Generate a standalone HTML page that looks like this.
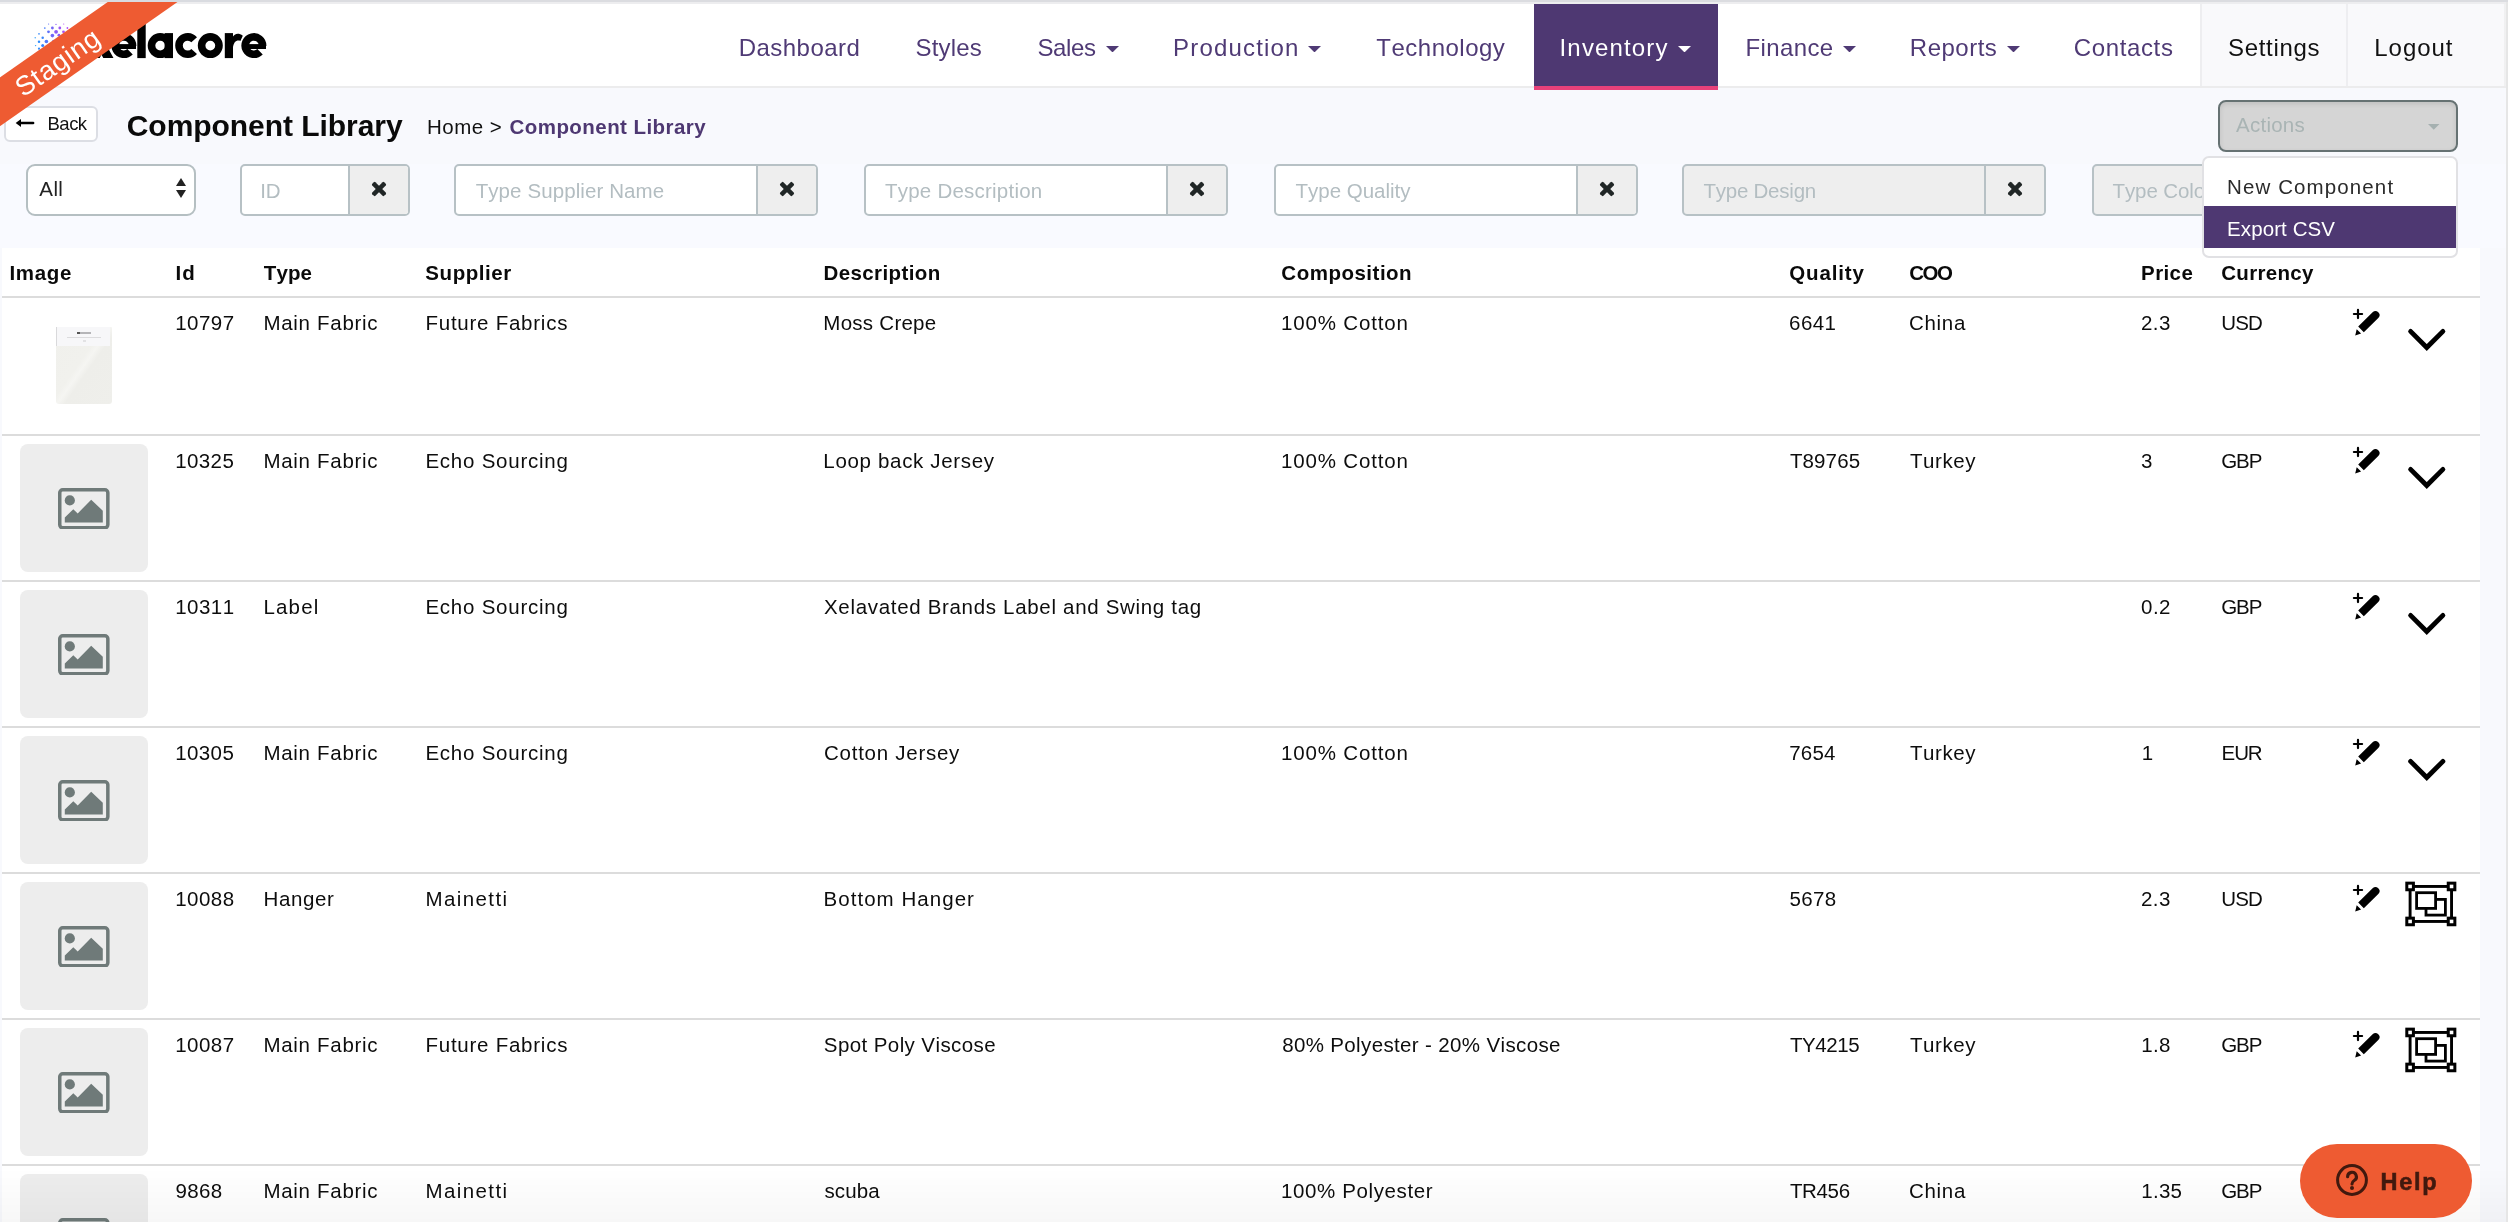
<!DOCTYPE html>
<html><head><meta charset="utf-8"><title>Component Library</title>
<style>
*{box-sizing:border-box;margin:0;padding:0}
html,body{width:2508px;height:1222px;overflow:hidden}
body{position:relative;font-family:"Liberation Sans", sans-serif;background:#f8f9fd;font-kerning:none}
.t{position:absolute;white-space:pre;display:block}
.a{position:absolute;display:block}
</style></head>
<body>
<div id="root" style="position:absolute;left:0;top:0;width:2508px;height:1222px;will-change:transform">

<div class="a" style="left:0;top:0;width:2508px;height:2px;background:#dbdce0"></div>
<div class="a" style="left:0;top:2px;width:2508px;height:2px;background:#ededef"></div>
<div class="a" style="left:0;top:4px;width:2504px;height:82px;background:#fff"></div>
<div class="a" style="left:2504px;top:4px;width:2px;height:82px;background:#f0f0f1"></div>
<div class="a" style="left:0;top:86px;width:2506px;height:2px;background:#ececed"></div>
<div class="a" style="left:2200px;top:4px;width:304px;height:82px;background:#f9f9fb;border-left:2px solid #eeeef0"></div>
<div class="a" style="left:2346px;top:4px;width:2px;height:82px;background:#eeeef1"></div>
<div class="a" style="left:1534px;top:4px;width:184px;height:86px;background:#4e3872;border-bottom:4px solid #e8417a"></div>
<svg class="a" style="left:1105.5px;top:45.8px" width="13" height="6.4" viewBox="0 0 13 6.4"><path d="M0 0H13L6.5 6.4Z" fill="#4f3a75"/></svg>
<svg class="a" style="left:1307.8px;top:45.8px" width="13" height="6.4" viewBox="0 0 13 6.4"><path d="M0 0H13L6.5 6.4Z" fill="#4f3a75"/></svg>
<svg class="a" style="left:1677.5px;top:45.8px" width="13" height="6.4" viewBox="0 0 13 6.4"><path d="M0 0H13L6.5 6.4Z" fill="#fff"/></svg>
<svg class="a" style="left:1842.7px;top:45.8px" width="13" height="6.4" viewBox="0 0 13 6.4"><path d="M0 0H13L6.5 6.4Z" fill="#4f3a75"/></svg>
<svg class="a" style="left:2006.8px;top:45.8px" width="13" height="6.4" viewBox="0 0 13 6.4"><path d="M0 0H13L6.5 6.4Z" fill="#4f3a75"/></svg>
<svg class="a" style="left:0;top:0" width="120" height="90" viewBox="0 0 120 90"><circle cx="48.6" cy="24.0" r="0.6" fill="#5b6cf5"/><circle cx="56" cy="24.4" r="0.65" fill="#8f5cf6"/><circle cx="63.7" cy="24" r="0.6" fill="#b04ff5"/><circle cx="44.8" cy="28" r="0.85" fill="#4a7dfa"/><circle cx="52.4" cy="28" r="1.4" fill="#7464f6"/><circle cx="59.8" cy="28" r="1.4" fill="#9c55f5"/><circle cx="67.4" cy="28" r="0.9" fill="#b84ff5"/><circle cx="48.5" cy="31.8" r="1.4" fill="#5f70f8"/><circle cx="56.1" cy="31.8" r="1.9" fill="#8a5cf7"/><circle cx="63.5" cy="31.8" r="1.4" fill="#a855f5"/><circle cx="52.4" cy="35.6" r="1.8" fill="#6f68f8"/><circle cx="58.9" cy="35.2" r="1.4" fill="#8a5cf7"/><circle cx="39" cy="33.8" r="0.85" fill="#3d8dfb"/><circle cx="35.2" cy="37.8" r="0.7" fill="#35a0fc"/><circle cx="42.7" cy="37.8" r="1.25" fill="#3a86fb"/><circle cx="39" cy="41.7" r="1.25" fill="#2f8dfc"/><circle cx="46.4" cy="41.5" r="1.8" fill="#4f78fa"/><circle cx="35.6" cy="45.6" r="0.7" fill="#35a0fc"/><circle cx="42.7" cy="45.4" r="1.5" fill="#3384fb"/><circle cx="39" cy="48.7" r="1.1" fill="#2f8dfc"/><circle cx="46.4" cy="49" r="1.6" fill="#3f80fb"/><circle cx="50" cy="45.3" r="1.8" fill="#5a72f9"/><circle cx="53.8" cy="41.5" r="1.8" fill="#6a6af8"/></svg>
<svg class="a" style="left:0;top:0" width="280" height="70" viewBox="0 0 280 70"><path d="M89.5 33.1H99.7L113.5 58.1H103.3ZM103.3 33.1H113.5L99.7 58.1H89.5Z" fill="#000"/><path d="M130.05 51.75A8.7 8.7 0 1 1 132.59 45.90" fill="none" stroke="#000" stroke-width="7.6"/><rect x="118.0" y="44.1" width="18.0" height="4.9" fill="#000"/><rect x="137.3" y="23.6" width="8.4" height="34.5" fill="#000"/><circle cx="160.2" cy="45.6" r="8.7" fill="none" stroke="#000" stroke-width="7.6"/><rect x="164.6" y="33.1" width="8.4" height="25" fill="#000"/><path d="M194.17 51.42A8.7 8.7 0 1 1 194.17 39.78" fill="none" stroke="#000" stroke-width="7.6"/><circle cx="210.3" cy="45.6" r="8.7" fill="none" stroke="#000" stroke-width="7.6"/><rect x="224.8" y="33.1" width="8.2" height="25" fill="#000"/><path d="M232.6 37.2C234.5 33.6 238.5 32.4 242.8 35.8L240.4 40.9C236.5 39.6 233.6 42 232.9 48Z" fill="#000"/><path d="M260.05 51.75A8.7 8.7 0 1 1 262.59 45.90" fill="none" stroke="#000" stroke-width="7.6"/><rect x="248.0" y="44.1" width="18.0" height="4.9" fill="#000"/></svg>
<div class="a" style="left:0;top:164px;width:2506px;height:84px;background:#f9faff"></div>
<div class="a" style="left:2px;top:248px;width:2478px;height:980px;background:#fff"></div>
<div class="a" style="left:2px;top:296px;width:2478px;height:2px;background:#dcdcdc"></div>
<div class="a" style="left:2px;top:434px;width:2478px;height:2px;background:#dcdcdc"></div>
<div class="a" style="left:2px;top:580px;width:2478px;height:2px;background:#dcdcdc"></div>
<div class="a" style="left:2px;top:726px;width:2478px;height:2px;background:#dcdcdc"></div>
<div class="a" style="left:2px;top:872px;width:2478px;height:2px;background:#dcdcdc"></div>
<div class="a" style="left:2px;top:1018px;width:2478px;height:2px;background:#dcdcdc"></div>
<div class="a" style="left:2px;top:1164px;width:2478px;height:2px;background:#dcdcdc"></div>
<div class="a" style="left:4px;top:106px;width:93.5px;height:35.5px;background:#fff;border:2px solid #dcdee4;border-radius:6px"></div>
<svg class="a" style="left:14px;top:114px" width="24" height="18" viewBox="0 0 24 18"><path d="M5 9H19.1" fill="none" stroke="#000" stroke-width="2.6" stroke-linecap="round"/><path d="M1.7 9L7 4.9V13.1Z" fill="#000"/></svg>
<div class="a" style="left:26px;top:164px;width:170px;height:52px;background:#fff;border:2px solid #b5bfc2;border-radius:9px"></div>
<svg class="a" style="left:175.5px;top:178px" width="10" height="20" viewBox="0 0 10 20"><path d="M0 8L5 0L10 8ZM0 12L5 20L10 12Z" fill="#222"/></svg>
<div class="a" style="left:240px;top:164px;width:170px;height:52px;border:2px solid #b7c1c5;border-radius:5px;background:#fff;overflow:hidden"><div class="a" style="left:106px;top:0;width:60px;height:48px;background:#eee;border-left:2px solid #b7c1c5"></div></div><svg class="a" style="left:369.00px;top:178.60px" width="20" height="20" viewBox="-10 -10 20 20"><g transform="rotate(45)" fill="#202626"><rect x="-8.4" y="-2.25" width="16.8" height="4.5" rx="1.1"/><rect x="-2.25" y="-8.4" width="4.5" height="16.8" rx="1.1"/></g></svg>
<div class="a" style="left:454px;top:164px;width:364px;height:52px;border:2px solid #b7c1c5;border-radius:5px;background:#fff;overflow:hidden"><div class="a" style="left:300px;top:0;width:60px;height:48px;background:#eee;border-left:2px solid #b7c1c5"></div></div><svg class="a" style="left:777.05px;top:178.60px" width="20" height="20" viewBox="-10 -10 20 20"><g transform="rotate(45)" fill="#202626"><rect x="-8.4" y="-2.25" width="16.8" height="4.5" rx="1.1"/><rect x="-2.25" y="-8.4" width="4.5" height="16.8" rx="1.1"/></g></svg>
<div class="a" style="left:864px;top:164px;width:364px;height:52px;border:2px solid #b7c1c5;border-radius:5px;background:#fff;overflow:hidden"><div class="a" style="left:300px;top:0;width:60px;height:48px;background:#eee;border-left:2px solid #b7c1c5"></div></div><svg class="a" style="left:1187.00px;top:178.60px" width="20" height="20" viewBox="-10 -10 20 20"><g transform="rotate(45)" fill="#202626"><rect x="-8.4" y="-2.25" width="16.8" height="4.5" rx="1.1"/><rect x="-2.25" y="-8.4" width="4.5" height="16.8" rx="1.1"/></g></svg>
<div class="a" style="left:1274px;top:164px;width:364px;height:52px;border:2px solid #b7c1c5;border-radius:5px;background:#fff;overflow:hidden"><div class="a" style="left:300px;top:0;width:60px;height:48px;background:#eee;border-left:2px solid #b7c1c5"></div></div><svg class="a" style="left:1597.05px;top:178.60px" width="20" height="20" viewBox="-10 -10 20 20"><g transform="rotate(45)" fill="#202626"><rect x="-8.4" y="-2.25" width="16.8" height="4.5" rx="1.1"/><rect x="-2.25" y="-8.4" width="4.5" height="16.8" rx="1.1"/></g></svg>
<div class="a" style="left:1682px;top:164px;width:364px;height:52px;border:2px solid #b7c1c5;border-radius:5px;background:#eee;overflow:hidden"><div class="a" style="left:300px;top:0;width:60px;height:48px;background:#eee;border-left:2px solid #b7c1c5"></div></div><svg class="a" style="left:2005.05px;top:178.60px" width="20" height="20" viewBox="-10 -10 20 20"><g transform="rotate(45)" fill="#202626"><rect x="-8.4" y="-2.25" width="16.8" height="4.5" rx="1.1"/><rect x="-2.25" y="-8.4" width="4.5" height="16.8" rx="1.1"/></g></svg>
<div class="a" style="left:2092px;top:164px;width:364px;height:52px;border:2px solid #b7c1c5;border-radius:5px;background:#eee;overflow:hidden"><div class="a" style="left:300px;top:0;width:60px;height:48px;background:#eee;border-left:2px solid #b7c1c5"></div></div><svg class="a" style="left:2414.95px;top:178.60px" width="20" height="20" viewBox="-10 -10 20 20"><g transform="rotate(45)" fill="#202626"><rect x="-8.4" y="-2.25" width="16.8" height="4.5" rx="1.1"/><rect x="-2.25" y="-8.4" width="4.5" height="16.8" rx="1.1"/></g></svg>
<span class="t" style="left:2112.52px;top:180.64px;font-size:20.5px;line-height:20.5px;font-weight:400;color:#b3bdc1;letter-spacing:-0.102px;">Type Color</span>
<div class="a" style="left:2218px;top:100px;width:240px;height:52px;background:#d5d5d5;border:2px solid #667273;border-radius:8px;box-shadow:inset 0 2px 5px rgba(0,0,0,.1)"></div>
<svg class="a" style="left:2428.2px;top:124px" width="11.5" height="5.8" viewBox="0 0 11.5 5.8"><path d="M0 0H11.5L5.75 5.8Z" fill="#a5b0b0"/></svg>
<div class="a" style="left:2202px;top:156px;width:256px;height:102px;background:#fff;border:2px solid #e1e1e4;border-radius:7px"></div>
<div class="a" style="left:2204px;top:206px;width:252px;height:42px;background:#4e3872"></div>
<div class="a" style="left:55.7px;top:326.5px;width:56.7px;height:77px;background:linear-gradient(125deg,#f0f0ec 0%,#f1f1ed 44%,#f5f5f2 50%,#eeeeea 57%,#efefeb 100%);border-radius:1px 1px 3px 3px"></div>
<div class="a" style="left:56.2px;top:326.5px;width:54px;height:19.2px;background:#f7f7f9;border-left:1.5px solid #d9d9db"></div>
<div class="a" style="left:76.5px;top:331.6px;width:3px;height:2.2px;background:#555"></div>
<div class="a" style="left:80px;top:332px;width:10.5px;height:1.6px;background:#b5b5b8"></div>
<div class="a" style="left:66.5px;top:336.7px;width:34px;height:1px;background:#dcdcde"></div>
<div class="a" style="left:82.5px;top:339.6px;width:3px;height:2.2px;background:#e2e2e4"></div>
<div class="a" style="left:20px;top:444px;width:128px;height:128px;background:#ededed;border-radius:8px"></div><svg class="a" style="left:58.3px;top:487.8px" width="51.6" height="41.6" viewBox="0 0 51.6 41.6"><rect x="1.75" y="1.75" width="48.1" height="38.1" rx="3" ry="3" fill="none" stroke="#6f7a79" stroke-width="3.5"/><circle cx="11.8" cy="12.4" r="5.1" fill="#6f7a79"/><path d="M6.8 29.5L15.3 21.2L19.7 25.4L33.2 11.8L44.8 22.7V34.6H6.8Z" fill="#6f7a79"/></svg>
<div class="a" style="left:20px;top:590px;width:128px;height:128px;background:#ededed;border-radius:8px"></div><svg class="a" style="left:58.3px;top:633.8px" width="51.6" height="41.6" viewBox="0 0 51.6 41.6"><rect x="1.75" y="1.75" width="48.1" height="38.1" rx="3" ry="3" fill="none" stroke="#6f7a79" stroke-width="3.5"/><circle cx="11.8" cy="12.4" r="5.1" fill="#6f7a79"/><path d="M6.8 29.5L15.3 21.2L19.7 25.4L33.2 11.8L44.8 22.7V34.6H6.8Z" fill="#6f7a79"/></svg>
<div class="a" style="left:20px;top:736px;width:128px;height:128px;background:#ededed;border-radius:8px"></div><svg class="a" style="left:58.3px;top:779.8px" width="51.6" height="41.6" viewBox="0 0 51.6 41.6"><rect x="1.75" y="1.75" width="48.1" height="38.1" rx="3" ry="3" fill="none" stroke="#6f7a79" stroke-width="3.5"/><circle cx="11.8" cy="12.4" r="5.1" fill="#6f7a79"/><path d="M6.8 29.5L15.3 21.2L19.7 25.4L33.2 11.8L44.8 22.7V34.6H6.8Z" fill="#6f7a79"/></svg>
<div class="a" style="left:20px;top:882px;width:128px;height:128px;background:#ededed;border-radius:8px"></div><svg class="a" style="left:58.3px;top:925.8px" width="51.6" height="41.6" viewBox="0 0 51.6 41.6"><rect x="1.75" y="1.75" width="48.1" height="38.1" rx="3" ry="3" fill="none" stroke="#6f7a79" stroke-width="3.5"/><circle cx="11.8" cy="12.4" r="5.1" fill="#6f7a79"/><path d="M6.8 29.5L15.3 21.2L19.7 25.4L33.2 11.8L44.8 22.7V34.6H6.8Z" fill="#6f7a79"/></svg>
<div class="a" style="left:20px;top:1028px;width:128px;height:128px;background:#ededed;border-radius:8px"></div><svg class="a" style="left:58.3px;top:1071.8px" width="51.6" height="41.6" viewBox="0 0 51.6 41.6"><rect x="1.75" y="1.75" width="48.1" height="38.1" rx="3" ry="3" fill="none" stroke="#6f7a79" stroke-width="3.5"/><circle cx="11.8" cy="12.4" r="5.1" fill="#6f7a79"/><path d="M6.8 29.5L15.3 21.2L19.7 25.4L33.2 11.8L44.8 22.7V34.6H6.8Z" fill="#6f7a79"/></svg>
<div class="a" style="left:20px;top:1174px;width:128px;height:128px;background:#ededed;border-radius:8px"></div><svg class="a" style="left:58.3px;top:1217.8px" width="51.6" height="41.6" viewBox="0 0 51.6 41.6"><rect x="1.75" y="1.75" width="48.1" height="38.1" rx="3" ry="3" fill="none" stroke="#6f7a79" stroke-width="3.5"/><circle cx="11.8" cy="12.4" r="5.1" fill="#6f7a79"/><path d="M6.8 29.5L15.3 21.2L19.7 25.4L33.2 11.8L44.8 22.7V34.6H6.8Z" fill="#6f7a79"/></svg>
<svg class="a" style="left:2352px;top:308px" width="30" height="30" viewBox="0 0 30 30"><path d="M1.9 6H10.1M6 1.9V10.1" stroke="#000" stroke-width="2.2" stroke-linecap="round" fill="none"/><path d="M6.2 18.5L20.6 4.3a4 4 0 0 1 5.7 5.7L11.8 24.3Z" fill="#000"/><path d="M4.7 21.3L9.1 25.5L3.2 27.4Z" fill="#000"/></svg>
<svg class="a" style="left:2406px;top:327px" width="44" height="28" viewBox="0 0 44 28"><path d="M4.6 4.4L20.75 20.5L36.9 4.4" stroke="#000" stroke-width="4.8" stroke-linecap="round" stroke-linejoin="miter" fill="none"/></svg>
<svg class="a" style="left:2352px;top:446px" width="30" height="30" viewBox="0 0 30 30"><path d="M1.9 6H10.1M6 1.9V10.1" stroke="#000" stroke-width="2.2" stroke-linecap="round" fill="none"/><path d="M6.2 18.5L20.6 4.3a4 4 0 0 1 5.7 5.7L11.8 24.3Z" fill="#000"/><path d="M4.7 21.3L9.1 25.5L3.2 27.4Z" fill="#000"/></svg>
<svg class="a" style="left:2406px;top:465px" width="44" height="28" viewBox="0 0 44 28"><path d="M4.6 4.4L20.75 20.5L36.9 4.4" stroke="#000" stroke-width="4.8" stroke-linecap="round" stroke-linejoin="miter" fill="none"/></svg>
<svg class="a" style="left:2352px;top:592px" width="30" height="30" viewBox="0 0 30 30"><path d="M1.9 6H10.1M6 1.9V10.1" stroke="#000" stroke-width="2.2" stroke-linecap="round" fill="none"/><path d="M6.2 18.5L20.6 4.3a4 4 0 0 1 5.7 5.7L11.8 24.3Z" fill="#000"/><path d="M4.7 21.3L9.1 25.5L3.2 27.4Z" fill="#000"/></svg>
<svg class="a" style="left:2406px;top:611px" width="44" height="28" viewBox="0 0 44 28"><path d="M4.6 4.4L20.75 20.5L36.9 4.4" stroke="#000" stroke-width="4.8" stroke-linecap="round" stroke-linejoin="miter" fill="none"/></svg>
<svg class="a" style="left:2352px;top:738px" width="30" height="30" viewBox="0 0 30 30"><path d="M1.9 6H10.1M6 1.9V10.1" stroke="#000" stroke-width="2.2" stroke-linecap="round" fill="none"/><path d="M6.2 18.5L20.6 4.3a4 4 0 0 1 5.7 5.7L11.8 24.3Z" fill="#000"/><path d="M4.7 21.3L9.1 25.5L3.2 27.4Z" fill="#000"/></svg>
<svg class="a" style="left:2406px;top:757px" width="44" height="28" viewBox="0 0 44 28"><path d="M4.6 4.4L20.75 20.5L36.9 4.4" stroke="#000" stroke-width="4.8" stroke-linecap="round" stroke-linejoin="miter" fill="none"/></svg>
<svg class="a" style="left:2352px;top:884px" width="30" height="30" viewBox="0 0 30 30"><path d="M1.9 6H10.1M6 1.9V10.1" stroke="#000" stroke-width="2.2" stroke-linecap="round" fill="none"/><path d="M6.2 18.5L20.6 4.3a4 4 0 0 1 5.7 5.7L11.8 24.3Z" fill="#000"/><path d="M4.7 21.3L9.1 25.5L3.2 27.4Z" fill="#000"/></svg>
<svg class="a" style="left:2405px;top:881px" width="52" height="46" viewBox="0 0 52 46"><g fill="none" stroke="#000"><rect x="5.1" y="5.45" width="41.45" height="35" stroke-width="2.9"/><rect x="21" y="18.4" width="19.4" height="15.7" stroke-width="2.8"/><rect x="11.6" y="11.7" width="19" height="15.7" stroke-width="2.8" fill="#fff"/><g stroke-width="3" fill="#fff"><rect x="1.8" y="2.15" width="6.6" height="6.6"/><rect x="43.25" y="2.15" width="6.6" height="6.6"/><rect x="1.8" y="37.15" width="6.6" height="6.6"/><rect x="43.25" y="37.15" width="6.6" height="6.6"/></g></g></svg>
<svg class="a" style="left:2352px;top:1030px" width="30" height="30" viewBox="0 0 30 30"><path d="M1.9 6H10.1M6 1.9V10.1" stroke="#000" stroke-width="2.2" stroke-linecap="round" fill="none"/><path d="M6.2 18.5L20.6 4.3a4 4 0 0 1 5.7 5.7L11.8 24.3Z" fill="#000"/><path d="M4.7 21.3L9.1 25.5L3.2 27.4Z" fill="#000"/></svg>
<svg class="a" style="left:2405px;top:1027px" width="52" height="46" viewBox="0 0 52 46"><g fill="none" stroke="#000"><rect x="5.1" y="5.45" width="41.45" height="35" stroke-width="2.9"/><rect x="21" y="18.4" width="19.4" height="15.7" stroke-width="2.8"/><rect x="11.6" y="11.7" width="19" height="15.7" stroke-width="2.8" fill="#fff"/><g stroke-width="3" fill="#fff"><rect x="1.8" y="2.15" width="6.6" height="6.6"/><rect x="43.25" y="2.15" width="6.6" height="6.6"/><rect x="1.8" y="37.15" width="6.6" height="6.6"/><rect x="43.25" y="37.15" width="6.6" height="6.6"/></g></g></svg>
<svg class="a" style="left:2352px;top:1176px" width="30" height="30" viewBox="0 0 30 30"><path d="M1.9 6H10.1M6 1.9V10.1" stroke="#000" stroke-width="2.2" stroke-linecap="round" fill="none"/><path d="M6.2 18.5L20.6 4.3a4 4 0 0 1 5.7 5.7L11.8 24.3Z" fill="#000"/><path d="M4.7 21.3L9.1 25.5L3.2 27.4Z" fill="#000"/></svg>
<span class="t" style="left:738.69px;top:35.68px;font-size:24px;line-height:24px;font-weight:400;color:#4f3a75;letter-spacing:0.464px;">Dashboard</span>
<span class="t" style="left:915.48px;top:35.68px;font-size:24px;line-height:24px;font-weight:400;color:#4f3a75;letter-spacing:0.188px;">Styles</span>
<span class="t" style="left:1037.48px;top:35.68px;font-size:24px;line-height:24px;font-weight:400;color:#4f3a75;letter-spacing:-0.366px;">Sales</span>
<span class="t" style="left:1173.03px;top:35.68px;font-size:24px;line-height:24px;font-weight:400;color:#4f3a75;letter-spacing:1.183px;">Production</span>
<span class="t" style="left:1376.33px;top:35.68px;font-size:24px;line-height:24px;font-weight:400;color:#4f3a75;letter-spacing:0.490px;">Technology</span>
<span class="t" style="left:1559.55px;top:35.68px;font-size:24px;line-height:24px;font-weight:400;color:#fff;letter-spacing:1.157px;">Inventory</span>
<span class="t" style="left:1745.51px;top:35.68px;font-size:24px;line-height:24px;font-weight:400;color:#4f3a75;letter-spacing:0.372px;">Finance</span>
<span class="t" style="left:1909.87px;top:35.68px;font-size:24px;line-height:24px;font-weight:400;color:#4f3a75;letter-spacing:0.484px;">Reports</span>
<span class="t" style="left:2073.85px;top:35.68px;font-size:24px;line-height:24px;font-weight:400;color:#4f3a75;letter-spacing:0.618px;">Contacts</span>
<span class="t" style="left:2227.96px;top:35.68px;font-size:24px;line-height:24px;font-weight:400;color:#111;letter-spacing:0.691px;">Settings</span>
<span class="t" style="left:2374.32px;top:35.68px;font-size:24px;line-height:24px;font-weight:400;color:#111;letter-spacing:0.938px;">Logout</span>
<span class="t" style="left:47.54px;top:115.34px;font-size:18.5px;line-height:18.5px;font-weight:400;color:#111;letter-spacing:-0.515px;">Back</span>
<span class="t" style="left:126.75px;top:110.60px;font-size:30px;line-height:30px;font-weight:700;color:#0a0a0a;letter-spacing:-0.049px;">Component Library</span>
<span class="t" style="left:426.98px;top:116.64px;font-size:20.5px;line-height:20.5px;font-weight:400;color:#111;letter-spacing:0.497px;">Home &gt;</span>
<span class="t" style="left:509.51px;top:116.64px;font-size:20.5px;line-height:20.5px;font-weight:700;color:#4e3872;letter-spacing:0.445px;">Component Library</span>
<span class="t" style="left:39.33px;top:178.64px;font-size:20.5px;line-height:20.5px;font-weight:400;color:#222;letter-spacing:0.400px;">All</span>
<span class="t" style="left:260.22px;top:180.64px;font-size:20.5px;line-height:20.5px;font-weight:400;color:#b3bdc1;letter-spacing:-0.204px;">ID</span>
<span class="t" style="left:475.65px;top:180.64px;font-size:20.5px;line-height:20.5px;font-weight:400;color:#b3bdc1;letter-spacing:0.095px;">Type Supplier Name</span>
<span class="t" style="left:885.00px;top:180.64px;font-size:20.5px;line-height:20.5px;font-weight:400;color:#b3bdc1;letter-spacing:0.227px;">Type Description</span>
<span class="t" style="left:1295.58px;top:180.64px;font-size:20.5px;line-height:20.5px;font-weight:400;color:#b3bdc1;letter-spacing:-0.024px;">Type Quality</span>
<span class="t" style="left:1703.38px;top:180.64px;font-size:20.5px;line-height:20.5px;font-weight:400;color:#b3bdc1;letter-spacing:-0.224px;">Type Design</span>
<span class="t" style="left:2236.00px;top:114.64px;font-size:20.5px;line-height:20.5px;font-weight:400;color:#a9b4b4;letter-spacing:0.259px;">Actions</span>
<span class="t" style="left:9.51px;top:262.64px;font-size:20.5px;line-height:20.5px;font-weight:700;color:#0a0a0a;letter-spacing:0.673px;">Image</span>
<span class="t" style="left:175.52px;top:262.64px;font-size:20.5px;line-height:20.5px;font-weight:700;color:#0a0a0a;letter-spacing:0.973px;">Id</span>
<span class="t" style="left:263.77px;top:262.64px;font-size:20.5px;line-height:20.5px;font-weight:700;color:#0a0a0a;letter-spacing:0.107px;">Type</span>
<span class="t" style="left:425.35px;top:262.64px;font-size:20.5px;line-height:20.5px;font-weight:700;color:#0a0a0a;letter-spacing:0.551px;">Supplier</span>
<span class="t" style="left:823.53px;top:262.64px;font-size:20.5px;line-height:20.5px;font-weight:700;color:#0a0a0a;letter-spacing:0.399px;">Description</span>
<span class="t" style="left:1281.35px;top:262.64px;font-size:20.5px;line-height:20.5px;font-weight:700;color:#0a0a0a;letter-spacing:0.502px;">Composition</span>
<span class="t" style="left:1789.23px;top:262.64px;font-size:20.5px;line-height:20.5px;font-weight:700;color:#0a0a0a;letter-spacing:0.852px;">Quality</span>
<span class="t" style="left:1909.33px;top:262.64px;font-size:20.5px;line-height:20.5px;font-weight:700;color:#0a0a0a;letter-spacing:-1.512px;">COO</span>
<span class="t" style="left:2141.12px;top:262.64px;font-size:20.5px;line-height:20.5px;font-weight:700;color:#0a0a0a;letter-spacing:0.385px;">Price</span>
<span class="t" style="left:2221.21px;top:262.64px;font-size:20.5px;line-height:20.5px;font-weight:700;color:#0a0a0a;letter-spacing:0.310px;">Currency</span>
<span class="t" style="left:175.13px;top:312.64px;font-size:20.5px;line-height:20.5px;font-weight:400;color:#0d0d0d;letter-spacing:0.503px;">10797</span>
<span class="t" style="left:263.43px;top:312.64px;font-size:20.5px;line-height:20.5px;font-weight:400;color:#0d0d0d;letter-spacing:0.705px;">Main Fabric</span>
<span class="t" style="left:425.46px;top:312.64px;font-size:20.5px;line-height:20.5px;font-weight:400;color:#0d0d0d;letter-spacing:0.754px;">Future Fabrics</span>
<span class="t" style="left:823.36px;top:312.64px;font-size:20.5px;line-height:20.5px;font-weight:400;color:#0d0d0d;letter-spacing:0.257px;">Moss Crepe</span>
<span class="t" style="left:1280.94px;top:312.64px;font-size:20.5px;line-height:20.5px;font-weight:400;color:#0d0d0d;letter-spacing:0.837px;">100% Cotton</span>
<span class="t" style="left:1789.05px;top:312.64px;font-size:20.5px;line-height:20.5px;font-weight:400;color:#0d0d0d;letter-spacing:0.450px;">6641</span>
<span class="t" style="left:1908.98px;top:312.64px;font-size:20.5px;line-height:20.5px;font-weight:400;color:#0d0d0d;letter-spacing:0.691px;">China</span>
<span class="t" style="left:2140.92px;top:312.64px;font-size:20.5px;line-height:20.5px;font-weight:400;color:#0d0d0d;letter-spacing:0.467px;">2.3</span>
<span class="t" style="left:2221.31px;top:312.64px;font-size:20.5px;line-height:20.5px;font-weight:400;color:#0d0d0d;letter-spacing:-0.937px;">USD</span>
<span class="t" style="left:175.13px;top:450.64px;font-size:20.5px;line-height:20.5px;font-weight:400;color:#0d0d0d;letter-spacing:0.431px;">10325</span>
<span class="t" style="left:263.43px;top:450.64px;font-size:20.5px;line-height:20.5px;font-weight:400;color:#0d0d0d;letter-spacing:0.705px;">Main Fabric</span>
<span class="t" style="left:425.43px;top:450.64px;font-size:20.5px;line-height:20.5px;font-weight:400;color:#0d0d0d;letter-spacing:0.760px;">Echo Sourcing</span>
<span class="t" style="left:823.33px;top:450.64px;font-size:20.5px;line-height:20.5px;font-weight:400;color:#0d0d0d;letter-spacing:0.671px;">Loop back Jersey</span>
<span class="t" style="left:1280.94px;top:450.64px;font-size:20.5px;line-height:20.5px;font-weight:400;color:#0d0d0d;letter-spacing:0.837px;">100% Cotton</span>
<span class="t" style="left:1789.95px;top:450.64px;font-size:20.5px;line-height:20.5px;font-weight:400;color:#0d0d0d;letter-spacing:0.118px;">T89765</span>
<span class="t" style="left:1909.96px;top:450.64px;font-size:20.5px;line-height:20.5px;font-weight:400;color:#0d0d0d;letter-spacing:0.601px;">Turkey</span>
<span class="t" style="left:2141.00px;top:450.64px;font-size:20.5px;line-height:20.5px;font-weight:400;color:#0d0d0d;letter-spacing:0.000px;">3</span>
<span class="t" style="left:2221.23px;top:450.64px;font-size:20.5px;line-height:20.5px;font-weight:400;color:#0d0d0d;letter-spacing:-1.082px;">GBP</span>
<span class="t" style="left:175.13px;top:596.64px;font-size:20.5px;line-height:20.5px;font-weight:400;color:#0d0d0d;letter-spacing:0.484px;">10311</span>
<span class="t" style="left:263.40px;top:596.64px;font-size:20.5px;line-height:20.5px;font-weight:400;color:#0d0d0d;letter-spacing:1.184px;">Label</span>
<span class="t" style="left:425.43px;top:596.64px;font-size:20.5px;line-height:20.5px;font-weight:400;color:#0d0d0d;letter-spacing:0.760px;">Echo Sourcing</span>
<span class="t" style="left:823.97px;top:596.64px;font-size:20.5px;line-height:20.5px;font-weight:400;color:#0d0d0d;letter-spacing:0.683px;">Xelavated Brands Label and Swing tag</span>
<span class="t" style="left:2141.04px;top:596.64px;font-size:20.5px;line-height:20.5px;font-weight:400;color:#0d0d0d;letter-spacing:0.443px;">0.2</span>
<span class="t" style="left:2221.23px;top:596.64px;font-size:20.5px;line-height:20.5px;font-weight:400;color:#0d0d0d;letter-spacing:-1.082px;">GBP</span>
<span class="t" style="left:175.13px;top:742.64px;font-size:20.5px;line-height:20.5px;font-weight:400;color:#0d0d0d;letter-spacing:0.431px;">10305</span>
<span class="t" style="left:263.43px;top:742.64px;font-size:20.5px;line-height:20.5px;font-weight:400;color:#0d0d0d;letter-spacing:0.705px;">Main Fabric</span>
<span class="t" style="left:425.43px;top:742.64px;font-size:20.5px;line-height:20.5px;font-weight:400;color:#0d0d0d;letter-spacing:0.760px;">Echo Sourcing</span>
<span class="t" style="left:824.09px;top:742.64px;font-size:20.5px;line-height:20.5px;font-weight:400;color:#0d0d0d;letter-spacing:0.731px;">Cotton Jersey</span>
<span class="t" style="left:1280.94px;top:742.64px;font-size:20.5px;line-height:20.5px;font-weight:400;color:#0d0d0d;letter-spacing:0.837px;">100% Cotton</span>
<span class="t" style="left:1789.15px;top:742.64px;font-size:20.5px;line-height:20.5px;font-weight:400;color:#0d0d0d;letter-spacing:0.229px;">7654</span>
<span class="t" style="left:1909.96px;top:742.64px;font-size:20.5px;line-height:20.5px;font-weight:400;color:#0d0d0d;letter-spacing:0.601px;">Turkey</span>
<span class="t" style="left:2141.76px;top:742.64px;font-size:20.5px;line-height:20.5px;font-weight:400;color:#0d0d0d;letter-spacing:0.000px;">1</span>
<span class="t" style="left:2221.59px;top:742.64px;font-size:20.5px;line-height:20.5px;font-weight:400;color:#0d0d0d;letter-spacing:-1.114px;">EUR</span>
<span class="t" style="left:175.13px;top:888.64px;font-size:20.5px;line-height:20.5px;font-weight:400;color:#0d0d0d;letter-spacing:0.489px;">10088</span>
<span class="t" style="left:263.51px;top:888.64px;font-size:20.5px;line-height:20.5px;font-weight:400;color:#0d0d0d;letter-spacing:0.624px;">Hanger</span>
<span class="t" style="left:425.43px;top:888.64px;font-size:20.5px;line-height:20.5px;font-weight:400;color:#0d0d0d;letter-spacing:1.408px;">Mainetti</span>
<span class="t" style="left:823.55px;top:888.64px;font-size:20.5px;line-height:20.5px;font-weight:400;color:#0d0d0d;letter-spacing:1.042px;">Bottom Hanger</span>
<span class="t" style="left:1789.39px;top:888.64px;font-size:20.5px;line-height:20.5px;font-weight:400;color:#0d0d0d;letter-spacing:0.421px;">5678</span>
<span class="t" style="left:2140.92px;top:888.64px;font-size:20.5px;line-height:20.5px;font-weight:400;color:#0d0d0d;letter-spacing:0.467px;">2.3</span>
<span class="t" style="left:2221.31px;top:888.64px;font-size:20.5px;line-height:20.5px;font-weight:400;color:#0d0d0d;letter-spacing:-0.937px;">USD</span>
<span class="t" style="left:175.13px;top:1034.64px;font-size:20.5px;line-height:20.5px;font-weight:400;color:#0d0d0d;letter-spacing:0.503px;">10087</span>
<span class="t" style="left:263.43px;top:1034.64px;font-size:20.5px;line-height:20.5px;font-weight:400;color:#0d0d0d;letter-spacing:0.705px;">Main Fabric</span>
<span class="t" style="left:425.46px;top:1034.64px;font-size:20.5px;line-height:20.5px;font-weight:400;color:#0d0d0d;letter-spacing:0.754px;">Future Fabrics</span>
<span class="t" style="left:823.84px;top:1034.64px;font-size:20.5px;line-height:20.5px;font-weight:400;color:#0d0d0d;letter-spacing:0.409px;">Spot Poly Viscose</span>
<span class="t" style="left:1282.15px;top:1034.64px;font-size:20.5px;line-height:20.5px;font-weight:400;color:#0d0d0d;letter-spacing:0.363px;">80% Polyester - 20% Viscose</span>
<span class="t" style="left:1789.89px;top:1034.64px;font-size:20.5px;line-height:20.5px;font-weight:400;color:#0d0d0d;letter-spacing:-0.384px;">TY4215</span>
<span class="t" style="left:1909.96px;top:1034.64px;font-size:20.5px;line-height:20.5px;font-weight:400;color:#0d0d0d;letter-spacing:0.601px;">Turkey</span>
<span class="t" style="left:2141.31px;top:1034.64px;font-size:20.5px;line-height:20.5px;font-weight:400;color:#0d0d0d;letter-spacing:0.251px;">1.8</span>
<span class="t" style="left:2221.23px;top:1034.64px;font-size:20.5px;line-height:20.5px;font-weight:400;color:#0d0d0d;letter-spacing:-1.082px;">GBP</span>
<span class="t" style="left:175.60px;top:1180.64px;font-size:20.5px;line-height:20.5px;font-weight:400;color:#0d0d0d;letter-spacing:0.301px;">9868</span>
<span class="t" style="left:263.43px;top:1180.64px;font-size:20.5px;line-height:20.5px;font-weight:400;color:#0d0d0d;letter-spacing:0.705px;">Main Fabric</span>
<span class="t" style="left:425.43px;top:1180.64px;font-size:20.5px;line-height:20.5px;font-weight:400;color:#0d0d0d;letter-spacing:1.408px;">Mainetti</span>
<span class="t" style="left:824.42px;top:1180.64px;font-size:20.5px;line-height:20.5px;font-weight:400;color:#0d0d0d;letter-spacing:0.145px;">scuba</span>
<span class="t" style="left:1281.04px;top:1180.64px;font-size:20.5px;line-height:20.5px;font-weight:400;color:#0d0d0d;letter-spacing:0.611px;">100% Polyester</span>
<span class="t" style="left:1789.89px;top:1180.64px;font-size:20.5px;line-height:20.5px;font-weight:400;color:#0d0d0d;letter-spacing:-0.328px;">TR456</span>
<span class="t" style="left:1908.98px;top:1180.64px;font-size:20.5px;line-height:20.5px;font-weight:400;color:#0d0d0d;letter-spacing:0.691px;">China</span>
<span class="t" style="left:2141.31px;top:1180.64px;font-size:20.5px;line-height:20.5px;font-weight:400;color:#0d0d0d;letter-spacing:0.275px;">1.35</span>
<span class="t" style="left:2221.23px;top:1180.64px;font-size:20.5px;line-height:20.5px;font-weight:400;color:#0d0d0d;letter-spacing:-1.082px;">GBP</span>
<div class="a" style="left:-146.5px;top:43.5px;width:400px;height:40px;background:#ee5b32;transform:rotate(-35deg);transform-origin:50% 50%;text-align:center;color:#fff;font-size:27px;line-height:42.5px;letter-spacing:0.8px;text-indent:8px;white-space:pre">Staging</div>
<div class="a" style="left:0;top:0;width:260px;height:2px;background:#d9dbe0"></div>
<div class="a" style="left:0;top:1168px;width:2508px;height:54px;background:linear-gradient(rgba(0,0,0,0),rgba(0,0,0,.032))"></div>
<div class="a" style="left:2300px;top:1144px;width:172px;height:74px;background:#ee5b32;border-radius:37px"></div>
<svg class="a" style="left:2334.9px;top:1162.9px" width="34" height="34" viewBox="0 0 34 34"><circle cx="17" cy="17" r="14.4" fill="none" stroke="#41190e" stroke-width="3"/><path d="M12.6 13.7a4.4 4.4 0 1 1 6.6 3.8c-1.6 1-2.2 1.6-2.2 3.4" fill="none" stroke="#41190e" stroke-width="3.1" stroke-linecap="round"/><circle cx="17" cy="24.9" r="2" fill="#41190e"/></svg>
<span class="t" style="left:2227.00px;top:176.64px;font-size:20.5px;line-height:20.5px;font-weight:400;color:#2b2b2b;letter-spacing:1.116px;">New Component</span>
<span class="t" style="left:2227.00px;top:218.64px;font-size:20.5px;line-height:20.5px;font-weight:400;color:#fff;letter-spacing:0.104px;">Export CSV</span>
<span class="t" style="left:2380.53px;top:1171.10px;font-size:23.5px;line-height:23.5px;font-weight:700;color:#41190e;letter-spacing:1.762px;-webkit-text-stroke:0.55px #41190e;">Help</span>
<div class="a" style="left:2506px;top:2px;width:2px;height:1220px;background:#e6e6e6"></div>
</div>
</body></html>
